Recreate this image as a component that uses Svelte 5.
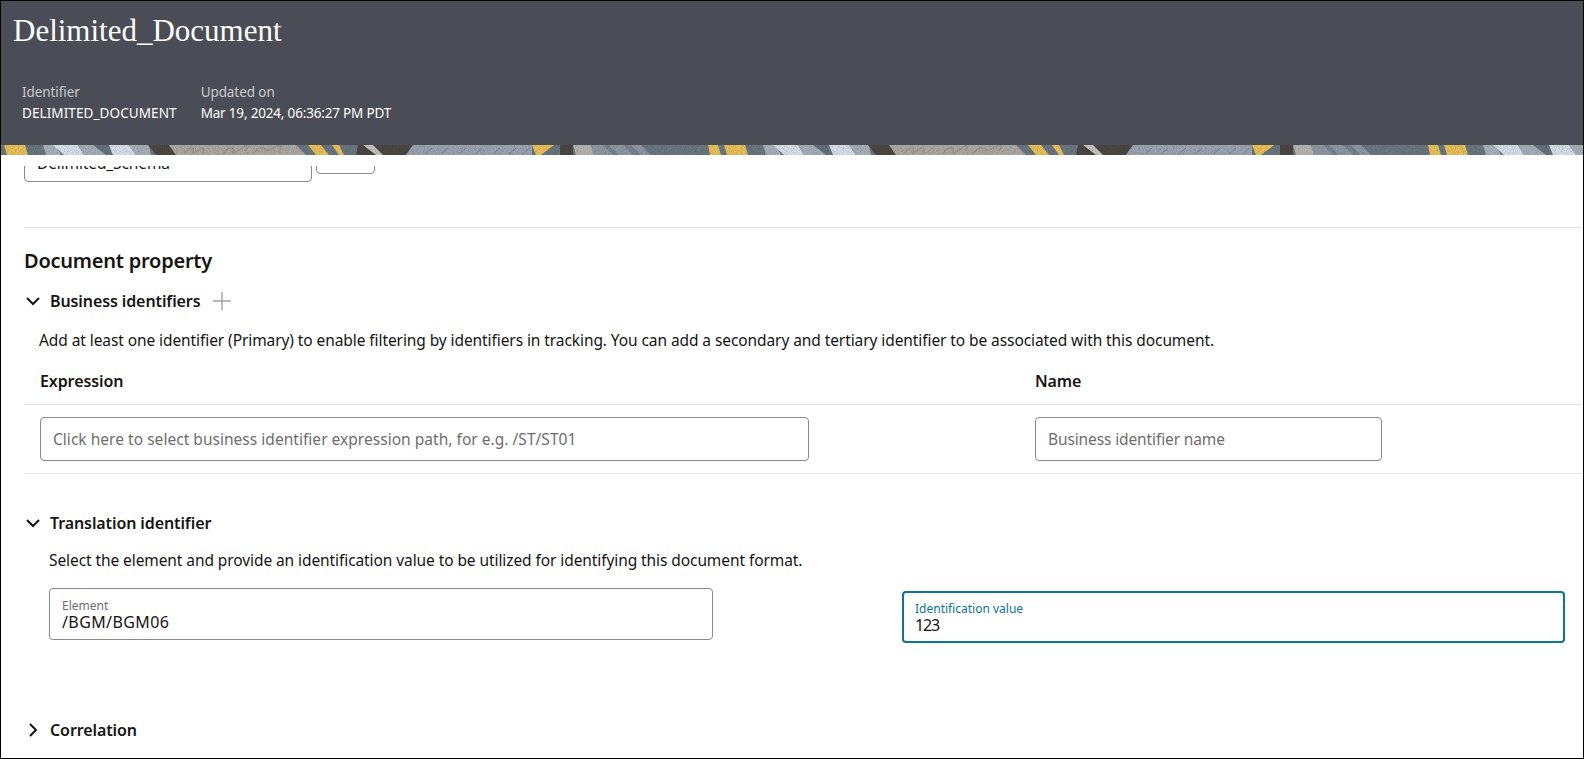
<script>
  // strip tile, 720px wide: each band is [top-left, top-right, bottom-right, bottom-left, colour]
  const bands = [
    [3, 24, 27, 6, '#e8c05a'],
    [42, 55, 60, 45, '#a8b1ba'],
    [52, 77, 83, 63, '#d6dfec'],
    [77, 108, 108, 83, '#a5aeb7'],
    [92, 108, 108, 105, '#667079'],
    [108, 128, 135, 112, '#d6dfec'],
    [128, 148, 150, 135, '#a7b0b9'],
    [147, 168, 175, 155, '#4a4744'],
    [168, 295, 305, 175, '#aba9a4'],
    [307, 320, 328, 315, '#e8c05a'],
    [331, 338, 343, 338, '#e8c05a'],
    [357, 412, 405, 355, '#4a4744'],
    [362, 372, 382, 375, '#c4c4c2'],
    [412, 531, 531, 405, '#9aa3b0'],
    [531, 553, 540, 535, '#e8c05a'],
    [559, 572, 572, 559, '#4a4744'],
    [572, 590, 593, 575, '#b5b4af'],
    [590, 640, 650, 593, '#8e97a3'],
    [602, 608, 618, 612, '#78838d'],
    [622, 630, 640, 632, '#78838d'],
    [707, 717, 720, 709, '#e8c05a']
  ];

  const dashes = [424, 440, 458, 474, 492, 508, 522];
</script>

<main class="page">
  <header class="banner">
    <h1 class="doc-title">Delimited_Document</h1>
    <dl class="meta">
      <div>
        <dt>Identifier</dt>
        <dd class="id-value">DELIMITED_DOCUMENT</dd>
      </div>
      <div>
        <dt>Updated on</dt>
        <dd class="date-value">Mar 19, 2024, 06:36:27 PM PDT</dd>
      </div>
    </dl>
  </header>

  <svg class="strip" width="100%" height="10" aria-hidden="true">
    <defs>
      <pattern id="tile" width="720" height="10" patternUnits="userSpaceOnUse">
        <rect width="720" height="10" fill="#6a7680" />
        {#each bands as b}
          <polygon points="{b[0]},0 {b[1]},0 {b[2]},10 {b[3]},10" fill={b[4]} />
        {/each}
        <path d="M184 8c6-8 10-6 8-1s8-6 10-4-2 6 2 5M222 9c4-7 12-8 10-3s6-1 10-4 6 0 2 4M252 8c6-6 10-6 12-4s4 2 10-2 8 0 4 4" fill="none" stroke="#979692" stroke-width="1.5" />
        {#each dashes as d}
          <path d="M{d} 9l7-6" stroke="#7a8390" stroke-width="1" />
        {/each}
      </pattern>
      <filter id="grain">
        <feTurbulence type="fractalNoise" baseFrequency="0.9" numOctaves="2" />
        <feColorMatrix values="0 0 0 0 0  0 0 0 0 0  0 0 0 0 0  0 0 0 1.4 -0.55" />
      </filter>
    </defs>
    <rect width="100%" height="10" fill="url(#tile)" />
    <rect width="100%" height="10" filter="url(#grain)" opacity="0.25" />
  </svg>

  <div class="content">
    <div class="schema-row">
      <input class="field schema-input" value="Delimited_Schema" readonly />
      <div class="schema-button"></div>
    </div>

    <hr class="rule top-rule" />

    <h2 class="section-title">Document property</h2>

    <section class="business">
      <div class="group-head">
        <svg class="chev" viewBox="0 0 16 16"><path d="M2 5l6 6 6-6" /></svg>
        <h3>Business identifiers</h3>
        <svg class="plus" viewBox="0 0 18 18"><path d="M9 0v18M0 9h18" /></svg>
      </div>
      <p class="hint biz-hint">Add at least one identifier (Primary) to enable filtering by identifiers in tracking. You can add a secondary and tertiary identifier to be associated with this document.</p>
      <div class="table-head">
        <span>Expression</span>
        <span>Name</span>
      </div>
      <div class="table-row">
        <div class="cell"><input class="field expr" placeholder="Click here to select business identifier expression path, for e.g. /ST/ST01" /></div>
        <div class="cell"><input class="field biz-name" placeholder="Business identifier name" /></div>
      </div>
    </section>

    <section class="translation">
      <div class="group-head">
        <svg class="chev" viewBox="0 0 16 16"><path d="M2 5l6 6 6-6" /></svg>
        <h3>Translation identifier</h3>
      </div>
      <p class="hint tr-hint">Select the element and provide an identification value to be utilized for identifying this document format.</p>
      <div class="tr-fields">
        <label class="float element">
          <span>Element</span>
          <input value="/BGM/BGM06" />
        </label>
        <label class="float focused">
          <span>Identification value</span>
          <input value="123" />
        </label>
      </div>
    </section>

    <section class="correlation">
      <div class="group-head">
        <svg class="chev" viewBox="0 0 16 16"><path d="M5 2l6 6-6 6" /></svg>
        <h3>Correlation</h3>
      </div>
    </section>
  </div>
</main>

<style>
  :global(body) {
    margin: 0;
    font-family: "Noto Sans", "Open Sans", Arial, sans-serif;
    color: #161513;
    background: #fff;
  }

  .page {
    box-sizing: border-box;
    height: 759px;
    border: 1px solid #000;
    overflow: hidden;
  }

  /* Banner */
  .banner {
    box-sizing: border-box;
    height: 144px;
    background: #4a4d55;
    color: #fff;
    padding: 12px 12px 0;
  }

  .doc-title {
    margin: 0;
    font-family: "Liberation Serif", serif;
    font-size: 31px;
    line-height: 36px;
    font-weight: 400;
  }

  .meta {
    display: flex;
    gap: 24px;
    margin: 33px 0 0 9px;
    font-size: 13.5px;
    letter-spacing: -0.08px;
    line-height: 21px;
  }

  .meta dt { color: #c9cacd; }
  .meta dd { margin: 0; }
  .meta .id-value { letter-spacing: 0.09px; }
  .meta .date-value { letter-spacing: -0.18px; }

  .strip { display: block; }

  /* Content */
  .content { padding-left: 23px; }

  .field {
    box-sizing: border-box;
    border: 1px solid #8a8a8a;
    border-radius: 4px;
    font: inherit;
    font-size: 15.5px;
    letter-spacing: -0.12px;
    color: #161513;
    background: #fff;
    padding: 0 12px;
    outline: none;
  }

  .field::placeholder { color: #6f6e6c; opacity: 1; }

  /* the schema row is scrolled almost out of view */
  .schema-row {
    height: 16px;
    margin-top: 11px;
    display: flex;
    align-items: flex-start;
    gap: 4px;
    overflow: hidden;
  }

  .schema-input {
    flex: none;
    width: 288px;
    height: 44px;
    margin-top: -28px;
    padding-top: 6px;
  }

  .schema-button {
    flex: none;
    width: 59px;
    height: 44px;
    margin-top: -36px;
    box-sizing: border-box;
    border: 1px solid #8a8a8a;
    border-radius: 4px;
  }

  .rule {
    border: 0;
    border-top: 1px solid #e4e4e3;
    margin: 0;
  }

  .top-rule { margin-top: 45px; }

  .section-title {
    margin: 19px 0 0;
    font-size: 20px;
    letter-spacing: -0.23px;
    line-height: 28px;
    font-weight: 600;
  }

  .group-head {
    display: flex;
    align-items: center;
    height: 24px;
  }

  .group-head h3 {
    margin: 0;
    font-size: 16px;
    letter-spacing: -0.1px;
    font-weight: 600;
  }

  .chev {
    width: 16px;
    height: 16px;
    margin: 0 9px 0 1px;
    fill: none;
    stroke: #161513;
    stroke-width: 2;
  }

  .plus {
    width: 18px;
    height: 18px;
    margin-left: 13px;
    fill: none;
    stroke: #a3a3a3;
    stroke-width: 1.4;
  }

  .business { margin-top: 14px; }

  .hint {
    margin: 0;
    font-size: 15.5px;
    letter-spacing: -0.085px;
    line-height: 24px;
  }

  .biz-hint { margin: 15px 0 0 15px; }

  .table-head {
    display: grid;
    grid-template-columns: 995px 1fr;
    margin-top: 17px;
    padding: 0 0 11px 16px;
    height: 24px;
    line-height: 24px;
    font-size: 16px;
    letter-spacing: -0.1px;
    font-weight: 600;
    border-bottom: 1px solid #e4e4e3;
  }

  .table-row {
    display: grid;
    grid-template-columns: 995px 1fr;
    padding: 12px 0 12px 16px;
    border-bottom: 1px solid #e4e4e3;
  }

  .expr { width: 769px; height: 44px; letter-spacing: 0.03px; }
  .biz-name { width: 347px; height: 44px; }

  .translation { margin-top: 37px; }

  .tr-hint { margin: 13px 0 0 25px; }

  .tr-fields {
    display: grid;
    grid-template-columns: 664px 663px;
    column-gap: 189px;
    margin: 16px 0 0 25px;
  }

  .float {
    box-sizing: border-box;
    display: flex;
    flex-direction: column;
    border: 1px solid #8a8a8a;
    border-radius: 4px;
    height: 52px;
    padding: 9px 12px 0;
  }

  .float span {
    font-size: 12px;
    line-height: 15px;
    color: #6f6e6c;
  }

  .float input {
    height: 18px;
    border: 0;
    padding: 0;
    outline: none;
    font: inherit;
    font-size: 16px;
    letter-spacing: 0.4px;
    line-height: 18px;
    color: #161513;
  }

  .focused {
    margin-top: 3px;
    border: 2px solid #0d7398;
    padding: 8px 11px 0;
  }

  .focused span { color: #0d7398; }

  .focused input { letter-spacing: -1.2px; }

  .correlation { margin-top: 75px; }
</style>
